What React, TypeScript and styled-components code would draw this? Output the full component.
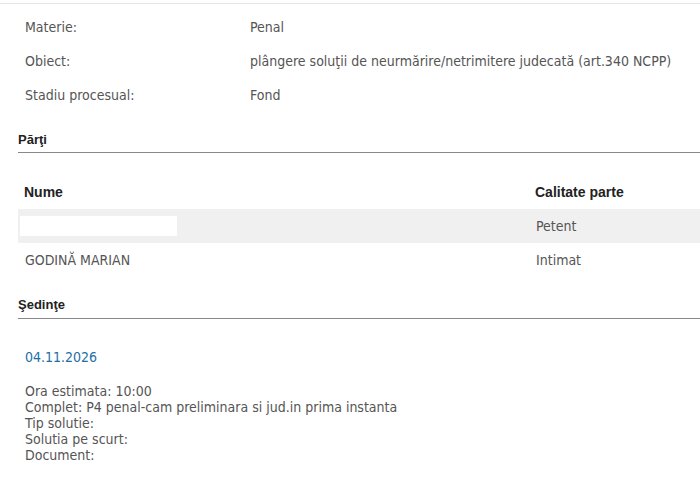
import React from "react";
import styled, { createGlobalStyle } from "styled-components";

const Global = createGlobalStyle`
  html, body { margin: 0; padding: 0; background: #fff; overflow: hidden; }
  body { width: 700px; height: 488px; }
`;

const Page = styled.div`
  width: 700px;
  border-top: 1px solid #e6e6e6;
  margin-top: 3px;
  padding-left: 18px;
  box-sizing: border-box;
  font-family: "DejaVu Sans Condensed", "DejaVu Sans", sans-serif;
  font-size: 14px;
  color: #555;
`;

const InfoTable = styled.div`
  display: grid;
  grid-template-columns: 225px 1fr;
  padding: 6px 0 0 7px;
`;

const InfoCell = styled.div`
  height: 34px;
  line-height: 34px;
  white-space: nowrap;
`;

const SectionTitle = styled.div<{ $mt: number; $pb: number }>`
  margin-top: ${(p) => p.$mt}px;
  font-family: "Liberation Sans", Arial, sans-serif;
  font-weight: bold;
  font-size: 13px;
  color: #222;
  padding-bottom: ${(p) => p.$pb}px;
  border-bottom: 1px solid #888;
`;

const Grid = styled.div`
  display: grid;
  grid-template-columns: 511px 1fr;
  margin-top: 24px;
`;

const HeadCell = styled.div`
  font-family: "Liberation Sans", Arial, sans-serif;
  font-weight: bold;
  font-size: 14px;
  color: #222;
  height: 32px;
  line-height: 30px;
  padding-left: 6px;
`;

const Row = styled.div<{ $striped?: boolean }>`
  display: contents;
  & > div {
    background: ${(p) => (p.$striped ? "#f0f0f0" : "transparent")};
  }
`;

const Cell = styled.div`
  height: 34px;
  padding-left: 7px;
  white-space: nowrap;
  display: flex;
  align-items: center;
`;

const Redacted = styled.div`
  width: 157px;
  height: 20px;
  background: #fff;
  margin-left: -5px;
`;

const Session = styled.div`
  padding: 30px 0 0 7px;
`;

const DateLink = styled.div`
  color: #1f6fa3;
  line-height: 16px;
`;

const Details = styled.div`
  margin-top: 18px;
  line-height: 16px;
`;

export default function App() {
  return (
    <>
      <Global />
      <Page>
        <InfoTable>
          <InfoCell>Materie:</InfoCell>
          <InfoCell>Penal</InfoCell>
          <InfoCell>Obiect:</InfoCell>
          <InfoCell>plângere soluţii de neurmărire/netrimitere judecată (art.340 NCPP)</InfoCell>
          <InfoCell>Stadiu procesual:</InfoCell>
          <InfoCell>Fond</InfoCell>
        </InfoTable>
        <SectionTitle $mt={20} $pb={5}>Părţi</SectionTitle>
        <Grid>
          <HeadCell>Nume</HeadCell>
          <HeadCell>Calitate parte</HeadCell>
          <Row $striped>
            <Cell><Redacted /></Cell>
            <Cell>Petent</Cell>
          </Row>
          <Row>
            <Cell>GODINĂ MARIAN</Cell>
            <Cell>Intimat</Cell>
          </Row>
        </Grid>
        <SectionTitle $mt={20} $pb={6}>Şedinţe</SectionTitle>
        <Session>
          <DateLink>04.11.2026</DateLink>
          <Details>
            Ora estimata: 10:00<br />
            Complet: P4 penal-cam preliminara si jud.in prima instanta<br />
            Tip solutie:<br />
            Solutia pe scurt:<br />
            Document:
          </Details>
        </Session>
      </Page>
    </>
  );
}
